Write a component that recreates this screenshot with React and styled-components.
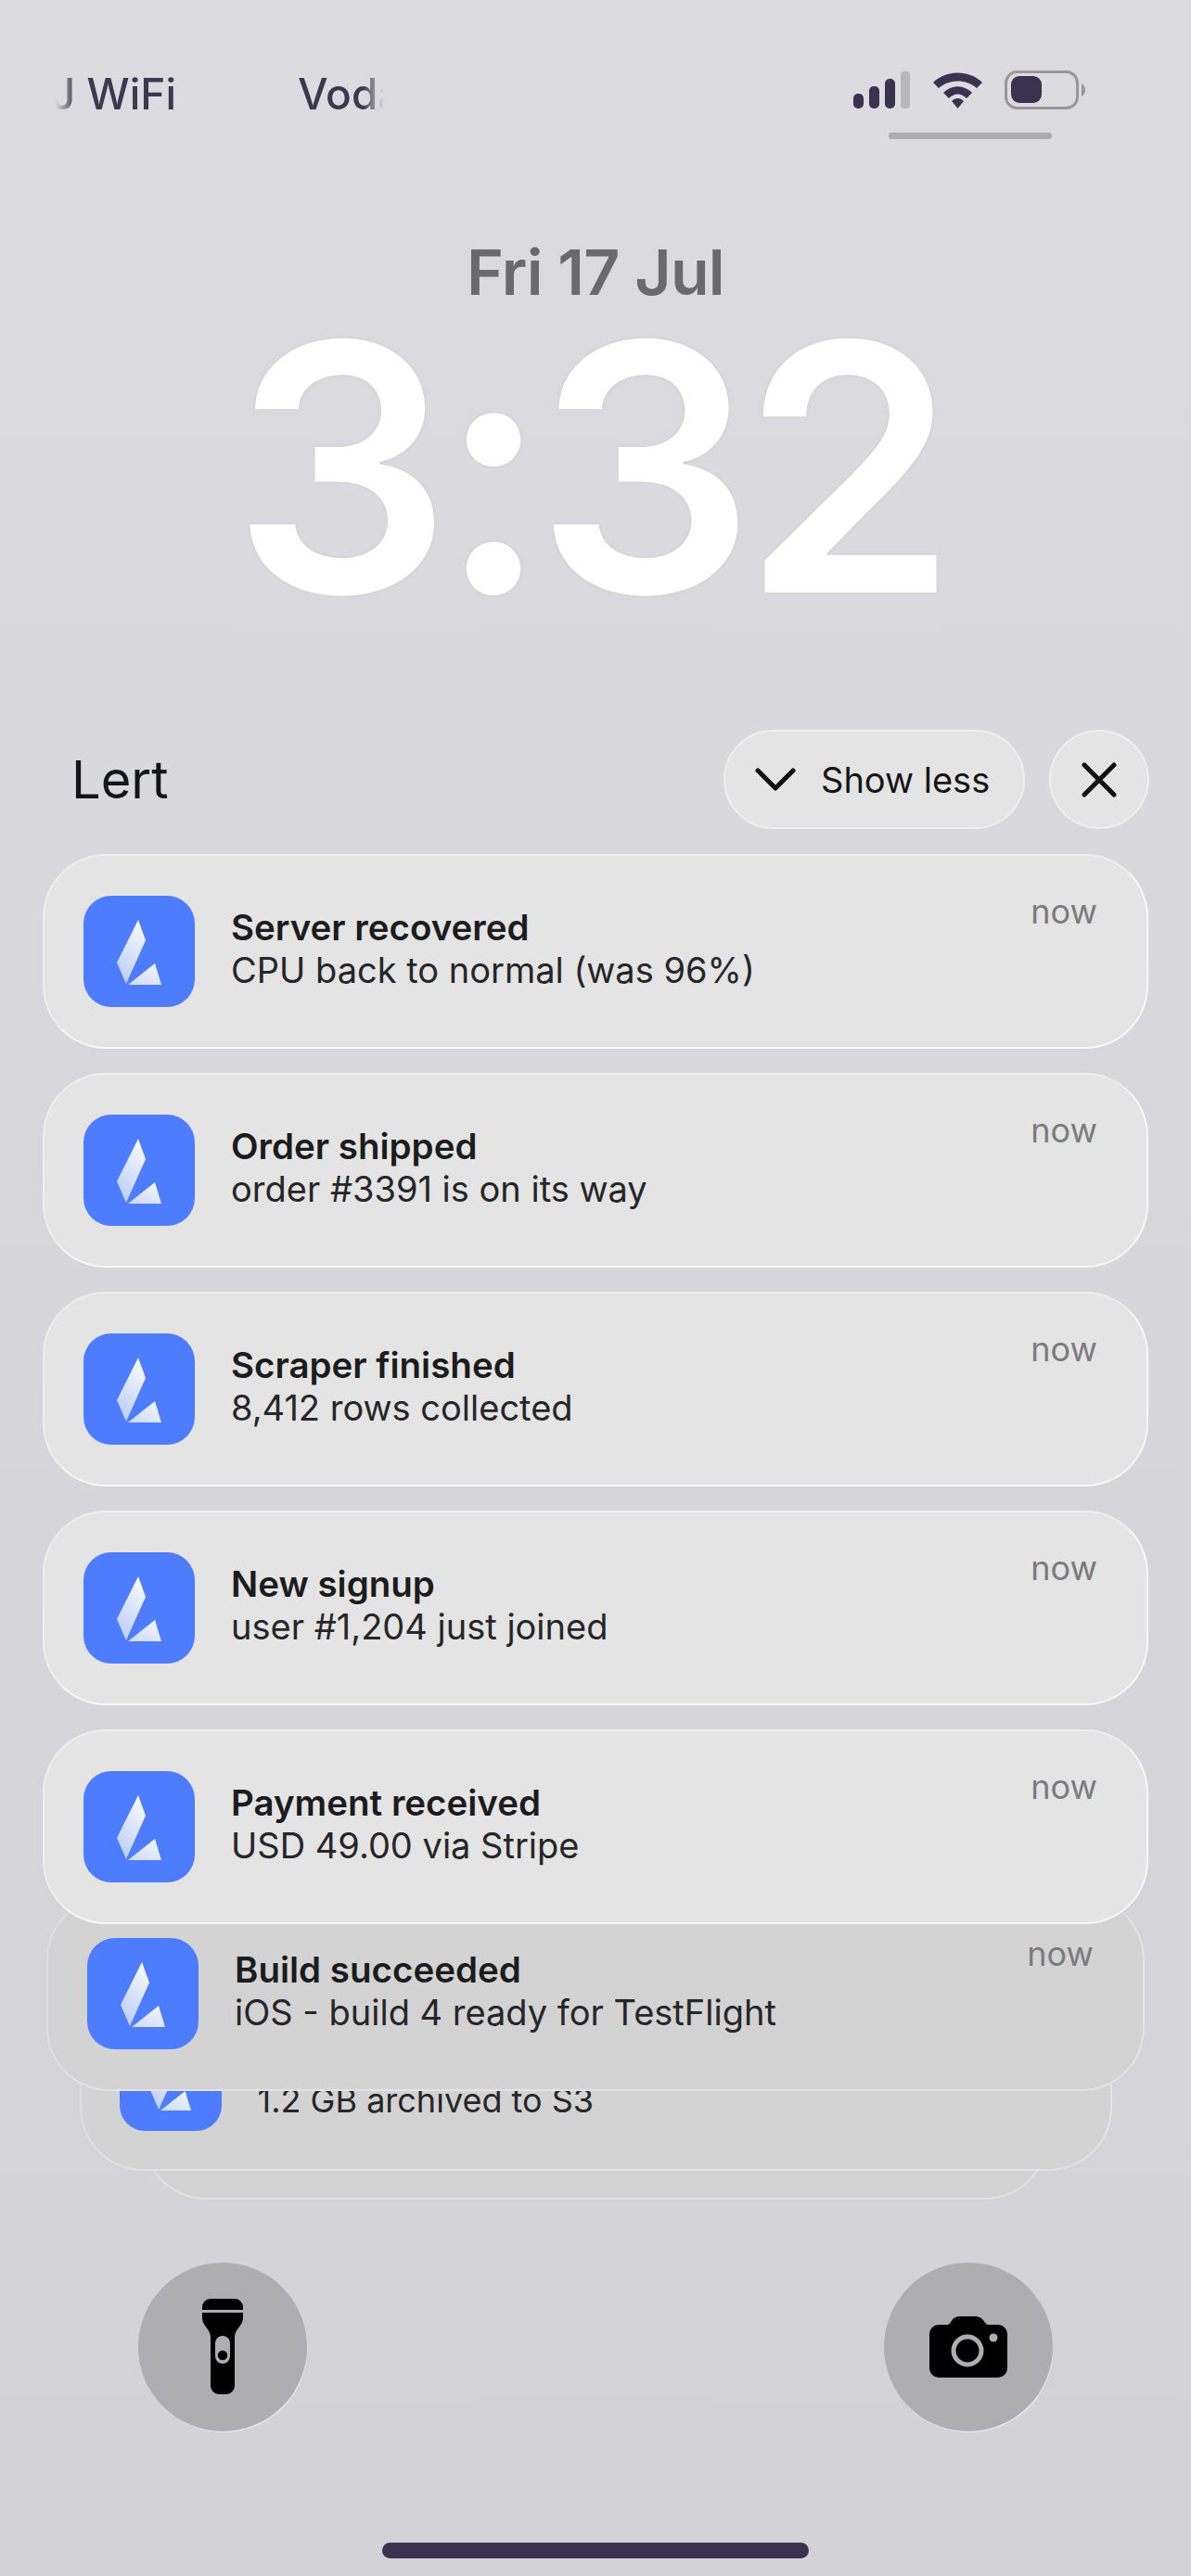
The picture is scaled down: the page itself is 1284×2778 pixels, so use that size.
import React from "react";
import styled, { createGlobalStyle } from "styled-components";

const Global = createGlobalStyle`
  html, body { margin: 0; padding: 0; background: #d8d8dc; }
  * { box-sizing: border-box; }
`;

const Screen = styled.div`
  width: 1284px;
  height: 2778px;
  overflow: hidden;
  display: flex;
  flex-direction: column;
  font-family: Inter, "Liberation Sans", sans-serif;
  background: linear-gradient(180deg, #dcdce0 0%, #d8d8dc 40%, #d2d2d7 100%);
`;

const StatusBar = styled.div`
  height: 150px;
  padding: 76px 113px 0 60px;
  display: flex;
  justify-content: space-between;
  align-items: flex-start;
`;

const Carriers = styled.div`
  display: flex;
  gap: 131px;
`;

const Carrier = styled.div`
  width: ${(p) => p.$width}px;
  height: 50px;
  overflow: hidden;
  white-space: nowrap;
  font-size: 46px;
  font-weight: 500;
  line-height: 50px;
  color: #3c3850;
  direction: ${(p) => (p.$tail ? "rtl" : "ltr")};
  -webkit-mask-image: ${(p) =>
    p.$tail
      ? "linear-gradient(90deg, transparent 0, #000 22px)"
      : "linear-gradient(90deg, #000 76%, transparent 100%)"};
  mask-image: ${(p) =>
    p.$tail
      ? "linear-gradient(90deg, transparent 0, #000 22px)"
      : "linear-gradient(90deg, #000 76%, transparent 100%)"};
`;

const StatusIcons = styled.div`
  display: flex;
  flex-direction: column;
  align-items: center;
  gap: 25px;
`;

const Grabber = styled.div`
  width: 176px;
  height: 7px;
  border-radius: 4px;
  background: #ababb1;
`;

const StatusSvg = styled.svg`
  display: block;
`;

const DateText = styled.div`
  margin-top: 105px;
  text-align: center;
  font-size: 68px;
  letter-spacing: -0.7px;
  line-height: 76px;
  font-weight: 600;
  color: #6a6a6e;
`;

const Time = styled.div`
  height: 347px;
  padding-right: 16px;
  text-align: center;
  font-size: 372px;
  line-height: 347px;
  font-weight: 600;
  letter-spacing: -14px;
  color: #ffffff;
  text-shadow: 0 0 3px rgba(160, 160, 170, 0.3);
`;

const Header = styled.div`
  margin-top: 109px;
  padding: 0 45px 0 77px;
  height: 107px;
  display: flex;
  align-items: center;
  justify-content: space-between;
`;

const AppName = styled.div`
  font-size: 56px;
  color: #14141c;
`;

const HeaderActions = styled.div`
  display: flex;
  gap: 26px;
`;

const Pill = styled.div`
  width: 325px;
  height: 107px;
  border-radius: 54px;
  background: #e4e4e5;
  border: 2px solid #efeff0;
  display: flex;
  align-items: center;
  gap: 27px;
  padding-left: 32px;
  font-size: 38px;
  color: #151515;
`;

const CloseButton = styled.div`
  width: 108px;
  height: 107px;
  border-radius: 50%;
  background: #e4e4e5;
  border: 2px solid #efeff0;
  display: flex;
  align-items: center;
  justify-content: center;
`;

const Stack = styled.div`
  margin-top: 27px;
  display: flex;
  flex-direction: column;
  align-items: center;
  gap: 26px;
`;

const Card = styled.div`
  width: ${(p) => p.$width || 1192}px;
  height: 210px;
  flex: none;
  z-index: ${(p) => p.$z};
  margin-top: ${(p) => p.$overlap || 0}px;
  border-radius: 68px;
  background: ${(p) => (p.$dim ? "#d3d3d3" : "#e4e4e4")};
  border: 2px solid ${(p) => (p.$dim ? "#dfdfe1" : "#eeeeef")};
  border-bottom-color: ${(p) => (p.$dim ? "#e4e4e6" : "#f8f8f8")};
  border-right-color: ${(p) => (p.$dim ? "#e4e4e6" : "#f8f8f8")};
  display: flex;
  align-items: ${(p) => (p.$bottom ? "flex-end" : "center")};
  padding: ${(p) => (p.$bottom ? "0 41px 41px" : "0 53px 0 42px")};
  overflow: hidden;
`;

const AppIcon = styled.div`
  width: ${(p) => p.$size}px;
  height: ${(p) => p.$size}px;
  border-radius: ${(p) => p.$size / 4}px;
  background: #4d7cfe;
  flex: none;
  display: flex;
  align-items: center;
  justify-content: center;
`;

const Logo = styled.svg`
  display: block;
`;

const Body = styled.div`
  flex: 1;
  margin-left: 39px;
  min-width: 0;
  padding-bottom: ${(p) => p.$lift || 6}px;
`;

const Title = styled.div`
  font-size: 38.5px;
  line-height: 46px;
  font-weight: 600;
  color: #1c1c1e;
`;

const Subtitle = styled.div`
  font-size: ${(p) => p.$size || 38}px;
  line-height: 46px;
  color: #262628;
  white-space: nowrap;
`;

const Stamp = styled.div`
  align-self: flex-start;
  margin-top: 39px;
  font-size: 36px;
  line-height: 42px;
  color: #7b7b7d;
`;

const Footer = styled.div`
  margin-top: auto;
  padding: 0 149px 0 149px;
  display: flex;
  justify-content: space-between;
`;

const RoundAction = styled.div`
  width: 182px;
  height: 182px;
  border-radius: 50%;
  background: #aeaeb0;
  box-shadow: 1px 2px 1px -1px #eeeef0;
  display: flex;
  align-items: center;
  justify-content: center;
`;

const HomeRow = styled.div`
  display: flex;
  justify-content: center;
  padding: 120px 0 19px;
`;

const HomeBar = styled.div`
  width: 460px;
  height: 17px;
  border-radius: 9px;
  background: #3a3350;
`;

const StatusGlyphs = () => (
  <StatusSvg width="251" height="42" viewBox="0 0 251 42">
    <rect x="0" y="25" width="11" height="16" rx="5" fill="#3a3350" />
    <rect x="17" y="17" width="11" height="24" rx="5" fill="#3a3350" />
    <rect x="34" y="9" width="11" height="32" rx="5" fill="#3a3350" />
    <rect x="51" y="1" width="10" height="40" rx="4" fill="#b8b8bc" />
    <path d="M86 13 C100 -1 125 -1 139 13 L133 19 C122 9 103 9 92 19 Z" fill="#3a3350" />
    <path d="M97 24 C106 15 119 15 128 24 L122 30 C116 24 109 24 103 30 Z" fill="#3a3350" />
    <path d="M106 33 C110 29 115 29 119 33 L112.5 41 Z" fill="#3a3350" />
    <rect x="164.5" y="1.5" width="77" height="39" rx="12" fill="none" stroke="#97979d" strokeWidth="3" />
    <rect x="170" y="6" width="33" height="29" rx="9" fill="#3a3350" />
    <path d="M246 14 C249 16 250 18 250 21 C250 24 249 26 246 28 Z" fill="#97979d" />
  </StatusSvg>
);

const LogoMark = ({ size = 120 }) => (
  <Logo width={size} height={size} viewBox="0 0 120 120">
    <defs>
      <linearGradient id="lgA" x1="0.7" y1="0" x2="0.3" y2="1">
        <stop offset="0" stopColor="#f8f9fd" />
        <stop offset="1" stopColor="#bccdf9" />
      </linearGradient>
      <linearGradient id="lgB" x1="0.9" y1="0" x2="0.2" y2="1">
        <stop offset="0" stopColor="#f4f6fd" />
        <stop offset="1" stopColor="#d0dcfb" />
      </linearGradient>
    </defs>
    <path d="M59 26 L67 48 L46 95 L36 72 Z" fill="url(#lgA)" />
    <path d="M77 73 L84 96 L48 96 Z" fill="url(#lgB)" />
  </Logo>
);

const Chevron = () => (
  <svg width="44" height="27" viewBox="0 0 44 27" fill="none">
    <path d="M3 4 L22 23 L41 4" stroke="#111" strokeWidth="5" strokeLinecap="round" strokeLinejoin="round" />
  </svg>
);

const Cross = () => (
  <svg width="38" height="38" viewBox="0 0 38 38" fill="none">
    <path d="M3 3 L35 35 M35 3 L3 35" stroke="#111" strokeWidth="5" strokeLinecap="round" />
  </svg>
);

const Flashlight = () => (
  <svg width="44" height="104" viewBox="0 0 44 104">
    <path d="M9 0 H35 A9 9 0 0 1 44 9 V12 H0 V9 A9 9 0 0 1 9 0 Z" fill="#000" />
    <path d="M0 15 H44 V20 C44 30 35 32 35 42 V94 A9 9 0 0 1 26 103 H18 A9 9 0 0 1 9 94 V42 C9 32 0 30 0 20 Z" fill="#000" />
    <rect x="14" y="40" width="16" height="30" rx="8" fill="#aeaeb0" />
    <circle cx="22" cy="61" r="6" fill="#000" stroke="#aeaeb0" strokeWidth="1.5" />
  </svg>
);

const Camera = () => (
  <svg width="84" height="66" viewBox="0 0 84 66">
    <path d="M10 9 H20 C23 9 24 0 32 0 H50 C58 0 60 9 63 9 H74 A10 10 0 0 1 84 19 V56 A10 10 0 0 1 74 66 H10 A10 10 0 0 1 0 56 V19 A10 10 0 0 1 10 9 Z" fill="#000" />
    <circle cx="41" cy="37" r="15" fill="none" stroke="#aeaeb0" strokeWidth="5" />
    <circle cx="69" cy="23" r="4.5" fill="#aeaeb0" />
  </svg>
);

const ROWS = [
  ["Server recovered", "CPU back to normal (was 96%)"],
  ["Order shipped", "order #3391 is on its way"],
  ["Scraper finished", "8,412 rows collected"],
  ["New signup", "user #1,204 just joined"],
  ["Payment received", "USD 49.00 via Stripe"],
];

export default function App() {
  return (
    <>
      <Global />
      <Screen>
        <StatusBar>
          <Carriers>
            <Carrier $width={130} $tail>
              <bdi>J WiFi</bdi>
            </Carrier>
            <Carrier $width={93}>Vodafone</Carrier>
          </Carriers>
          <StatusIcons>
            <StatusGlyphs />
            <Grabber />
          </StatusIcons>
        </StatusBar>
        <DateText>Fri 17 Jul</DateText>
        <Time>3:32</Time>
        <Header>
          <AppName>Lert</AppName>
          <HeaderActions>
            <Pill>
              <Chevron />
              Show less
            </Pill>
            <CloseButton>
              <Cross />
            </CloseButton>
          </HeaderActions>
        </Header>
        <Stack>
          {ROWS.map(([t, s], i) => (
            <Card key={t} $z={20 - i}>
              <AppIcon $size={120}>
                <LogoMark />
              </AppIcon>
              <Body>
                <Title>{t}</Title>
                <Subtitle>{s}</Subtitle>
              </Body>
              <Stamp>now</Stamp>
            </Card>
          ))}
          <Card $z={5} $width={1184} $overlap={-56} $dim>
            <AppIcon $size={120}>
              <LogoMark />
            </AppIcon>
            <Body>
              <Title>Build succeeded</Title>
              <Subtitle>iOS - build 4 ready for TestFlight</Subtitle>
            </Body>
            <Stamp>now</Stamp>
          </Card>
          <Card $z={4} $width={1113} $overlap={-150} $dim $bottom>
            <AppIcon $size={110}>
              <LogoMark size={110} />
            </AppIcon>
            <Body $lift={10}>
              <Subtitle $size={36}>1.2 GB archived to S3</Subtitle>
            </Body>
          </Card>
          <Card $z={3} $width={976} $overlap={-205} $dim />
        </Stack>
        <Footer>
          <RoundAction>
            <Flashlight />
          </RoundAction>
          <RoundAction>
            <Camera />
          </RoundAction>
        </Footer>
        <HomeRow>
          <HomeBar />
        </HomeRow>
      </Screen>
    </>
  );
}
